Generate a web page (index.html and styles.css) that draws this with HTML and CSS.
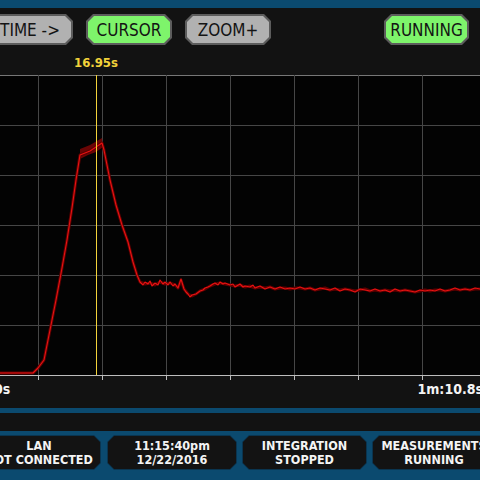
FILE: index.html
```html
<!DOCTYPE html>
<html>
<head>
<meta charset="utf-8">
<link rel="stylesheet" href="styles.css">
</head>
<body>
<div class="screen">
  <div class="topbar"></div>
  <div class="toolbar">
    <div class="btn gray"><span class="btn-face">TIME -&gt;</span></div>
    <div class="btn green"><span class="btn-face">CURSOR</span></div>
    <div class="btn gray"><span class="btn-face">ZOOM+</span></div>
    <div class="btn green run"><span class="btn-face">RUNNING</span></div>
  </div>
  <div class="cursor-row"><span class="cursor-label" style="left:96px">16.95s</span></div>
  <svg class="plot" width="480" height="306" viewBox="0 0 480 306">
    <rect x="0" y="0" width="480" height="300" fill="#030303"/>
    <g stroke="#464646" stroke-width="1">
      <line x1="0" y1="0.5" x2="480" y2="0.5" stroke="#777"/>
      <line x1="0" y1="50.5" x2="480" y2="50.5"/>
      <line x1="0" y1="100.5" x2="480" y2="100.5"/>
      <line x1="0" y1="150.5" x2="480" y2="150.5"/>
      <line x1="0" y1="200.5" x2="480" y2="200.5"/>
      <line x1="0" y1="250.5" x2="480" y2="250.5"/>
      <line x1="38.5" y1="0" x2="38.5" y2="300"/>
      <line x1="102.5" y1="0" x2="102.5" y2="300"/>
      <line x1="166.5" y1="0" x2="166.5" y2="300"/>
      <line x1="230.5" y1="0" x2="230.5" y2="300"/>
      <line x1="294.5" y1="0" x2="294.5" y2="300"/>
      <line x1="358.5" y1="0" x2="358.5" y2="300"/>
      <line x1="422.5" y1="0" x2="422.5" y2="300"/>
    </g>
    <g stroke="#bdbdbd" stroke-width="1">
      <line x1="0" y1="300.5" x2="480" y2="300.5"/>
      <line x1="38.5" y1="300" x2="38.5" y2="305"/>
      <line x1="102.5" y1="300" x2="102.5" y2="305"/>
      <line x1="166.5" y1="300" x2="166.5" y2="305"/>
      <line x1="230.5" y1="300" x2="230.5" y2="305"/>
      <line x1="294.5" y1="300" x2="294.5" y2="305"/>
      <line x1="358.5" y1="300" x2="358.5" y2="305"/>
      <line x1="422.5" y1="300" x2="422.5" y2="305"/>
    </g>
    <polygon points="80,74 90,70 102,63 103,72 96,77 88,80 80,84" fill="#6a0505"/>
    <polyline fill="none" stroke="#5e0000" stroke-width="3" stroke-linejoin="round"
      points="0,298 33,298 38,293 44,285 50,255 56,225 62,193 67,165 72,133 76,105 80,80 90,76 96,72 102,68 104,75 110,105 116,130 122,150 128,167 133,187 137,200 140,207 145,209 150,208 155,210 160,207 165,209 170,208 175,210 178,213 181,205 184,214 188,219 192,221 196,219 200,216 205,214 210,211 215,209 220,208 225,209 230,210 235,211 240,210 245,212 250,211 255,213 260,212 265,213 270,212 275,214 280,213 285,213 290,214 295,213 300,213 305,214 310,213 315,215 320,214 325,213 330,215 335,214 340,215 345,214 350,215 355,216 360,215 365,214 370,216 375,215 380,216 385,215 390,216 395,215 400,216 405,215 410,216 415,217 420,216 425,215 430,216 435,215 440,215 445,216 450,215 455,214 460,215 465,214 470,215 475,214 480,214"/>
    <polyline fill="none" stroke="#e81212" stroke-width="1.1" stroke-linejoin="round"
      points="0,298 33,298 38,293 44,285 50,255 56,225 62,193 67,165 72,133 76,105 80,80 90,76 96,72 102,68 104,75 110,105 116,130 122,150 128,167 133,187 137,200 140,207 143,210 145,207 148,209 150,206 152,211 155,208 158,210 160,205 163,209 165,207 168,210 170,207 173,211 175,209 178,213 181,204 184,214 186,217 188,219 190,222 192,220 196,219 200,216 203,215 205,213 208,212 210,211 213,209 215,208 218,210 220,207 223,209 225,208 230,210 233,209 235,212 240,209 243,212 245,211 250,212 253,210 255,213 260,211 265,214 270,212 275,214 280,212 285,214 290,213 295,214 300,212 305,214 310,213 315,215 320,213 325,214 330,215 335,213 340,216 345,214 350,215 355,217 360,214 365,215 370,216 375,214 380,216 385,215 390,217 395,214 400,216 405,215 410,216 415,217 420,215 425,216 430,215 435,216 440,214 445,216 450,215 455,213 460,215 465,214 470,215 475,213 480,214"/>
    <line x1="96.5" y1="0" x2="96.5" y2="300" stroke="#f2d23a" stroke-width="1"/>
  </svg>
  <div class="axis-labels"><span>0s</span><span>1m:10.8s</span></div>
  <div class="stripe"></div>
  <div class="darkband"></div>
  <div class="status">
    <div class="sbox w124"><span class="sface">LAN<br>NOT CONNECTED</span></div>
    <div class="sbox w130"><span class="sface">11:15:40pm<br>12/22/2016</span></div>
    <div class="sbox w125"><span class="sface">INTEGRATION<br>STOPPED</span></div>
    <div class="sbox w124"><span class="sface">MEASUREMENTS<br>RUNNING</span></div>
  </div>
</div>
</body>
</html>
```

FILE: styles.css
```css
html, body {
  margin: 0;
  padding: 0;
  background: #111;
}
.screen {
  width: 480px;
  height: 480px;
  overflow: hidden;
  background: #121212;
  display: flex;
  flex-direction: column;
  font-family: "DejaVu Sans Condensed", "DejaVu Sans", sans-serif;
}
.topbar {
  height: 8px;
  flex: none;
  background: #0b4a6f;
}
.toolbar {
  flex: none;
  height: 31px;
  display: flex;
  gap: 13px;
  margin-left: -13px;
  padding: 6px 11px 9px 0;
}
.btn {
  width: 86px;
  height: 31px;
  box-sizing: border-box;
  padding: 2px;
  background: #5c5c5c;
  clip-path: polygon(7px 0, calc(100% - 7px) 0, 100% 7px, 100% calc(100% - 7px), calc(100% - 7px) 100%, 7px 100%, 0 calc(100% - 7px), 0 7px);
  display: flex;
}
.btn-face {
  flex: 1;
  display: flex;
  align-items: center;
  justify-content: center;
  font-size: 17px;
  color: #141414;
  clip-path: polygon(6px 0, calc(100% - 6px) 0, 100% 6px, 100% calc(100% - 6px), calc(100% - 6px) 100%, 6px 100%, 0 calc(100% - 6px), 0 6px);
}
.gray .btn-face { background: #b1b1b1; }
.green .btn-face { background: #7ef46b; }
.run {
  margin-left: auto;
  width: 85px;
}
.cursor-row {
  flex: none;
  height: 21px;
  position: relative;
}
.cursor-label {
  position: absolute;
  top: 2px;
  transform: translateX(-50%);
  color: #f2d23a;
  font-weight: bold;
  font-size: 13px;
  line-height: 14px;
}
.plot {
  flex: none;
  display: block;
}
.axis-labels {
  flex: none;
  height: 27px;
  display: flex;
  justify-content: space-between;
  margin: 0 -3px 0 -6px;
  color: #f4f4f4;
  font-weight: bold;
  font-size: 14px;
  line-height: 14px;
  padding-top: 1px;
  box-sizing: border-box;
}
.stripe {
  flex: none;
  height: 5px;
  background: #0b4a6f;
}
.darkband {
  flex: none;
  height: 18px;
  background: #121212;
}
.status {
  flex: 1;
  background: #0b4a6f;
  display: flex;
  gap: 5px;
  margin-left: -23px;
  padding-top: 4px;
}
.sbox {
  flex: none;
  height: 35px;
  padding: 1px;
  box-sizing: border-box;
  background: #0a3550;
  clip-path: polygon(7px 0, calc(100% - 7px) 0, 100% 7px, 100% calc(100% - 7px), calc(100% - 7px) 100%, 7px 100%, 0 calc(100% - 7px), 0 7px);
  display: flex;
}
.sbox:first-child { margin-right: 1px; }
.w124 { width: 124px; }
.w125 { width: 125px; }
.w130 { width: 130px; }
.sface {
  flex: 1;
  display: flex;
  flex-direction: column;
  align-items: center;
  justify-content: center;
  text-align: center;
  background: #131313;
  color: #f4f4f4;
  font-weight: bold;
  font-size: 12.5px;
  line-height: 14px;
  clip-path: polygon(6px 0, calc(100% - 6px) 0, 100% 6px, 100% calc(100% - 6px), calc(100% - 6px) 100%, 6px 100%, 0 calc(100% - 6px), 0 6px);
}
```
